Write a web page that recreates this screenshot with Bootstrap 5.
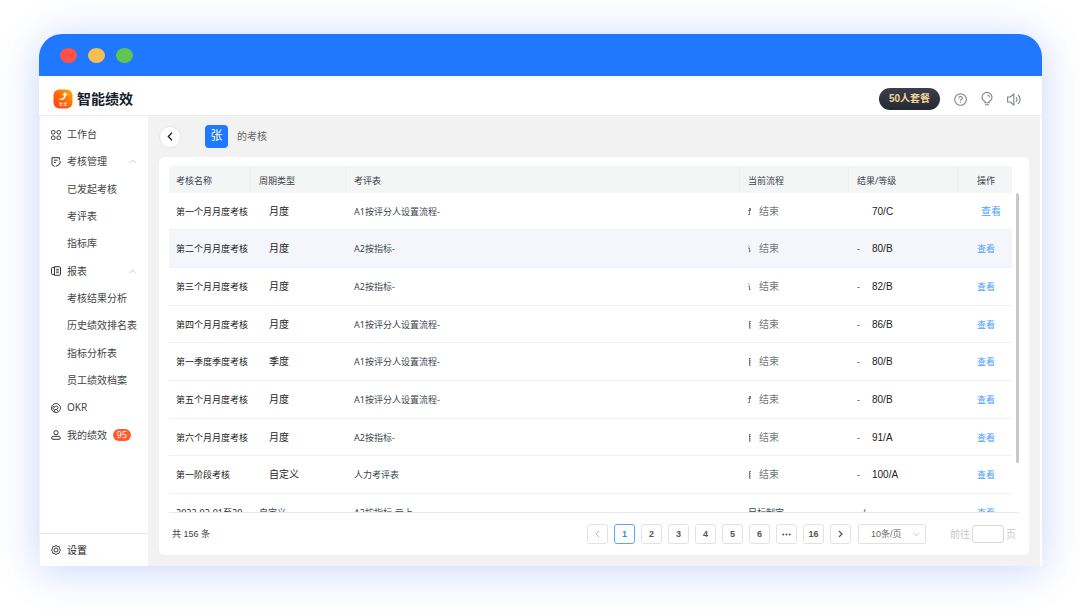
<!DOCTYPE html>
<html lang="zh-CN">
<head>
<meta charset="utf-8">
<meta name="viewport" content="width=device-width, initial-scale=1">
<title>智能绩效</title>
<link href="https://cdn.jsdelivr.net/npm/bootstrap@5.3.0/dist/css/bootstrap.min.css" rel="stylesheet">
<style>
  body { font-family: "Noto Sans", "Noto Sans CJK SC", sans-serif; font-size: 10px; line-height: 15px; color: #333; background: #fff; min-height: 100vh; padding: 34px 38px 44px 39px; }
  svg { display: block; flex: none; }
  a { text-decoration: none; }
  .app-window { border-radius: 23px 23px 0 0; box-shadow: 0 4px 40px rgba(50, 100, 255, .27); }
  .title-strip { height: 42px; padding-left: 21px; gap: 11px; background: #1f78ff; border-radius: 23px 23px 0 0; }
  .dot { width: 17px; height: 15px; border-radius: 50%; }
  .app-header { height: 40px; padding: 7px 21px 0 14px; background: #fff; border-bottom: 1px solid #ececec; }
  .brand { font-size: 14px; line-height: 20px; font-weight: 700; color: #14202e; gap: 4px; }
  .tools { gap: 14px; }
  .plan-btn { height: 22px; width: 61px; border: 0; border-radius: 11px; background: linear-gradient(#3b3f4c, #252933); color: #f3d49b; font-size: 10px; line-height: 20px; font-weight: 700; padding: 0; font-family: "Liberation Sans", "Noto Sans CJK SC", sans-serif; }
  .tool-btn { border: 0; padding: 0; background: none; color: #7d8288; }
  .side { width: 109px; background: #fff; border-left: 1px solid #f0f2f6; }
  .side-menu { padding-top: 5px; }
  .side-link { height: 27px; padding-left: 11px; padding-right: 12px; gap: 6px; color: #444; white-space: nowrap; }
  .side-menu li:nth-child(3n) .side-link { height: 28px; }
  .side-link.sub-link { padding-left: 27px; }
  .count-pill { background: #ff5b2b; color: #fff; border-radius: 6px; width: 18px; height: 12px; font-size: 9px; line-height: 12px; text-align: center; }
  .side-foot { border-top: 1px solid #e6e6e6; }
  .side-foot .side-link { height: 32px; color: #222; }
  .content { background: #f2f2f2; border-right: 2px solid #fff; padding: 9px 11px 11px; min-width: 0; }
  .back-btn { width: 22px; height: 22px; border-radius: 50%; border: 1px solid #e8e8e8; background: #fff; padding: 0; color: #222; }
  .avatar { width: 23px; height: 23px; border-radius: 4px; background: #1f78ff; color: #fff; font-size: 12px; line-height: 22px; text-align: center; margin-left: 24px; }
  .owner { margin-left: 9px; color: #666; }
  .panel { background: #fff; border-radius: 6px; padding: 9px 10px 0; margin-top: 9px; height: 398px; }
  .grid-wrap { height: 347px; overflow: hidden; padding-right: 7px; border-bottom: 1px solid #e6e9f2; position: relative; }
  .grid-table { width: 100%; table-layout: fixed; border-collapse: separate; border-spacing: 0; font-size: 9px; }
  .grid-table th { height: 27px; padding: 2px 0 0 8px; background: #f4f6f6; border-right: 1px solid #edf0f0; font-weight: 400; color: #39434d; }
  .grid-table th:last-child { border-right: 0; padding-left: 19px; }
  .grid-table td { height: 38px; padding: 0 0 0 8px; border-bottom: 1px solid #eef1f5; color: #3c4650; white-space: nowrap; }
  .grid-table tr:nth-child(3n+1) td { height: 37px; }
  .grid-table tr:last-child td { height: 38px; }
  .grid-table th:first-child, .grid-table td:first-child { padding-left: 7px; }
  .grid-table .row-hover td { background: #f4f6fb; }
  .grid-table td:first-child, .grid-table .period { color: #1c1c1c; }
  .grid-table .period { font-size: 10px; padding-left: 18px; }
  .grid-table td:last-child { padding-left: 19px; }
  .grid-table a { color: #4a9eff; }
  .grid-table a.first-view { font-size: 10px; margin-left: 4px; }
  .step-state { font-size: 10px; color: #777; margin-left: 8px; }
  .dash { width: 15px; }
  .score { font-size: 10px; color: #222; font-family: "Liberation Sans", sans-serif; }
  .scroll-thumb { position: absolute; right: 0; top: 27px; width: 3px; height: 270px; border-radius: 2px; background: #c9c9c9; }
  .pager { height: 42px; padding-left: 3px; padding-right: 3px; font-family: "Liberation Sans", "Noto Sans CJK SC", sans-serif; }
  .total { font-size: 9px; color: #444; }
  .page-btn { width: 21px; height: 20px; border: 1px solid #e2e2e2; border-radius: 3px; background: #fff; padding: 0; font-size: 9px; line-height: 18px; font-weight: 700; color: #555; }
  .page-btn.current { border-color: #55a8ff; color: #2c8fff; }
  .pages { gap: 6px; margin-right: 7px; }
  .form-select.size-select { width: 68px; height: 20px; border: 1px solid #e2e2e2; border-radius: 2px; padding: 0 0 0 12px; font-size: 9px; line-height: 18px; color: #666; background-position: right 5px center; background-size: 7px 7px; background-image: url("data:image/svg+xml,%3Csvg xmlns='http://www.w3.org/2000/svg' viewBox='0 0 8 8'%3E%3Cpath d='M1 2.5 4 5.5 7 2.5' fill='none' stroke='%23bbb'/%3E%3C/svg%3E"); }
  .jump { color: #c8c8c8; gap: 2px; margin-left: 24px; }
  .form-control.jump-box { width: 32px; height: 18px; border: 1px solid #d8d8d8; border-radius: 3px; padding: 0 4px; font-size: 9px; }
</style>
</head>
<body>
<svg width="0" height="0" class="position-absolute" aria-hidden="true">
  <symbol id="step-a" viewBox="0 0 3 9"><path d="M1.500 1v7M0 3.500h3M2.500 1v2M0 8l1.500-1" fill="none" stroke="#5c6670" stroke-width=".8"/></symbol>
  <symbol id="step-b" viewBox="0 0 3 9"><path d="M.5 1.500 1.500 2.500M0 4h1.500v4L2.800 7" fill="none" stroke="#5c6670" stroke-width=".8"/></symbol>
  <symbol id="step-c" viewBox="0 0 3 9"><path d="M1.500 1v7.500M1.500 1.500H3M1.500 3.600H3M1.500 5.800H3M1.500 8H3" fill="none" stroke="#5c6670" stroke-width=".8"/></symbol>
</svg>
<div class="app-window d-flex flex-column">
  <div class="title-strip d-flex align-items-center">
    <span class="dot" style="background:#ff5145"></span>
    <span class="dot" style="background:#f5be50"></span>
    <span class="dot" style="background:#61c554"></span>
  </div>
  <header class="app-header d-flex align-items-center justify-content-between">
    <div class="brand d-flex align-items-center">
      <svg width="20" height="20" viewBox="0 0 20 20"><defs><linearGradient id="lg" x1="0" y1="1" x2="1" y2="0"><stop offset="0" stop-color="#ff3d12"/><stop offset=".5" stop-color="#ff6a0a"/><stop offset="1" stop-color="#ffae00"/></linearGradient></defs><rect x=".5" y=".5" width="19" height="19" rx="6" fill="url(#lg)"/><path d="M5.200 9.500c3 2.800 7.800 1.500 7.600-4h-1.600c0 3.600-2.500 4.800-6 4z" fill="#fff"/><path d="M9.300 6.300 12 3l2.700 3.300z" fill="#fff"/><path d="M6 14.300h3.500M6 16.300h3.500M7.700 13.300v3.700M10.500 14.300H14M10.500 16.300H14M12.200 13.300v3.700" stroke="#ffe3d0" stroke-width=".8"/></svg>
      <span>智能绩效</span>
    </div>
    <div class="tools d-flex align-items-center">
      <button class="plan-btn" type="button">50人套餐</button>
      <button class="tool-btn" type="button" aria-label="帮助"><svg width="13" height="13" viewBox="0 0 13 13" fill="none" stroke="currentColor" stroke-width="1.100"><circle cx="6.500" cy="6.500" r="5.800"/><path d="M4.800 5.200c0-2.200 3.500-2.200 3.500 0 0 1.300-1.800 1.300-1.800 2.600M6.500 8.700v1.100"/></svg></button>
      <button class="tool-btn" type="button" aria-label="提示"><svg width="12" height="14" viewBox="0 0 12 14" fill="none" stroke="currentColor" stroke-width="1.100"><path d="M4 10.800V9.500C2 8.500 1 7.200 1 5.500a5 5 0 0 1 10 0c0 1.700-1 3-3 4v1.300zM4 12.800h4M6.500 3a2.300 2.300 0 0 1 2 2.200"/></svg></button>
      <button class="tool-btn" type="button" aria-label="声音"><svg width="14" height="13" viewBox="0 0 14 13" fill="none" stroke="currentColor" stroke-width="1.100"><path d="M.6 4h2.600L6.800 1v11L3.200 9H.6zM9 4.200c1.300 1.200 1.300 3.400 0 4.600M11 2c2.800 2.500 2.800 6.500 0 9"/></svg></button>
    </div>
  </header>
  <div class="d-flex flex-grow-1">
    <nav class="side d-flex flex-column flex-shrink-0">
      <ul class="side-menu list-unstyled mb-0 flex-grow-1">
        <li><a href="#" class="side-link d-flex align-items-center"><svg width="10" height="10" viewBox="0 0 10 10" fill="none" stroke="#333"><rect x=".5" y=".5" width="3.500" height="3.500" rx="1.300"/><rect x="6" y=".5" width="3.500" height="3.500" rx="1.300"/><rect x=".5" y="6" width="3.500" height="3.500" rx="1.300"/><rect x="6" y="6" width="3.500" height="3.500" rx="1.300"/></svg>工作台</a></li>
        <li><a href="#" class="side-link d-flex align-items-center"><svg width="10" height="10" viewBox="0 0 10 10" fill="none" stroke="#333"><path d="M3.800 9.500 1 7.800V.7h7.500v2M2.800 3.200h3.800M2.800 5.500h2M4.800 9.300l3.200-1.500 1.500-3-1.300-1"/></svg>考核管理<svg class="ms-auto" width="7" height="5" viewBox="0 0 7 5" fill="none" stroke="#bbb" stroke-width=".8"><path d="M.5 4 3.500 1l3 3"/></svg></a></li>
        <li><a href="#" class="side-link sub-link d-flex align-items-center">已发起考核</a></li>
        <li><a href="#" class="side-link sub-link d-flex align-items-center">考评表</a></li>
        <li><a href="#" class="side-link sub-link d-flex align-items-center">指标库</a></li>
        <li><a href="#" class="side-link d-flex align-items-center"><svg width="10" height="10" viewBox="0 0 10 10" fill="none" stroke="#333"><path d="M3.500.7h4.700q1.300 0 1.300 1.200v6.200q0 1.200-1.300 1.200H3.500zM3.500 1.500H1.800Q.5 1.500.5 2.700v4.600q0 1.200 1.300 1.200h1.700"/><path d="M5 3.300h3M5 5h3M5 6.700h3" stroke-width=".8"/></svg>报表<svg class="ms-auto" width="7" height="5" viewBox="0 0 7 5" fill="none" stroke="#bbb" stroke-width=".8"><path d="M.5 4 3.500 1l3 3"/></svg></a></li>
        <li><a href="#" class="side-link sub-link d-flex align-items-center">考核结果分析</a></li>
        <li><a href="#" class="side-link sub-link d-flex align-items-center">历史绩效排名表</a></li>
        <li><a href="#" class="side-link sub-link d-flex align-items-center">指标分析表</a></li>
        <li><a href="#" class="side-link sub-link d-flex align-items-center">员工绩效档案</a></li>
        <li><a href="#" class="side-link d-flex align-items-center"><svg width="10" height="10" viewBox="0 0 10 10" fill="none" stroke="#333" stroke-width=".9"><circle cx="5" cy="5" r="4.500"/><path d="M3.700 9V6.600h1.700a1.800 1.800 0 1 0-2-1.800M5.500 6.600l2 1.900M2.400 6.800a3.300 3.300 0 0 1 .4-4"/></svg>OKR</a></li>
        <li><a href="#" class="side-link d-flex align-items-center"><svg width="10" height="10" viewBox="0 0 10 10" fill="none" stroke="#333"><circle cx="5" cy="2.700" r="2.100"/><path d="M2.700 6.300h4.600q2 0 2 1.500t-1.200 1.500H1.900Q.7 9.300.7 7.800t2-1.500z"/></svg>我的绩效<span class="count-pill">95</span></a></li>
      </ul>
      <div class="side-foot"><a href="#" class="side-link d-flex align-items-center"><svg width="10" height="10" viewBox="0 0 10 10" fill="none" stroke="#222" stroke-width=".9"><path d="M5 .5 6.500 1.400l1.700.3.300 1.800L9.500 5l-1 1.500-.3 1.800-1.700.3L5 9.500l-1.500-.9-1.700-.3-.3-1.800L.5 5l1-1.500.3-1.800 1.700-.3z"/><circle cx="5" cy="5" r="2"/></svg>设置</a></div>
    </nav>
    <main class="content flex-grow-1">
      <div class="d-flex align-items-center">
        <button class="back-btn d-flex align-items-center justify-content-center" type="button" aria-label="返回"><svg width="6" height="9" viewBox="0 0 6 9" fill="none" stroke="currentColor" stroke-width="1.300"><path d="M5 .8 1.300 4.500 5 8.200"/></svg></button>
        <span class="avatar">张</span><span class="owner">的考核</span>
      </div>
      <section class="panel">
        <div class="grid-wrap">
          <table class="grid-table">
            <colgroup><col style="width:82px"><col style="width:95px"><col><col style="width:109px"><col style="width:109px"><col style="width:54px"></colgroup>
            <thead><tr><th>考核名称</th><th>周期类型</th><th>考评表</th><th>当前流程</th><th>结果/等级</th><th>操作</th></tr></thead>
            <tbody>
              <tr><td>第一个月月度考核</td><td class="period">月度</td><td>A1按评分人设置流程-</td><td><div class="d-flex align-items-center"><svg width="3" height="9"><use href="#step-a"/></svg><span class="step-state">结束</span></div></td><td><div class="d-flex"><span class="dash"></span><span class="score">70/C</span></div></td><td><a href="#" class="first-view">查看</a></td></tr>
              <tr class="row-hover"><td>第二个月月度考核</td><td class="period">月度</td><td>A2按指标-</td><td><div class="d-flex align-items-center"><svg width="3" height="9"><use href="#step-b"/></svg><span class="step-state">结束</span></div></td><td><div class="d-flex"><span class="dash">-</span><span class="score">80/B</span></div></td><td><a href="#">查看</a></td></tr>
              <tr><td>第三个月月度考核</td><td class="period">月度</td><td>A2按指标-</td><td><div class="d-flex align-items-center"><svg width="3" height="9"><use href="#step-b"/></svg><span class="step-state">结束</span></div></td><td><div class="d-flex"><span class="dash">-</span><span class="score">82/B</span></div></td><td><a href="#">查看</a></td></tr>
              <tr><td>第四个月月度考核</td><td class="period">月度</td><td>A1按评分人设置流程-</td><td><div class="d-flex align-items-center"><svg width="3" height="9"><use href="#step-c"/></svg><span class="step-state">结束</span></div></td><td><div class="d-flex"><span class="dash">-</span><span class="score">86/B</span></div></td><td><a href="#">查看</a></td></tr>
              <tr><td>第一季度季度考核</td><td class="period">季度</td><td>A1按评分人设置流程-</td><td><div class="d-flex align-items-center"><svg width="3" height="9"><use href="#step-c"/></svg><span class="step-state">结束</span></div></td><td><div class="d-flex"><span class="dash">-</span><span class="score">80/B</span></div></td><td><a href="#">查看</a></td></tr>
              <tr><td>第五个月月度考核</td><td class="period">月度</td><td>A1按评分人设置流程-</td><td><div class="d-flex align-items-center"><svg width="3" height="9"><use href="#step-a"/></svg><span class="step-state">结束</span></div></td><td><div class="d-flex"><span class="dash">-</span><span class="score">80/B</span></div></td><td><a href="#">查看</a></td></tr>
              <tr><td>第六个月月度考核</td><td class="period">月度</td><td>A2按指标-</td><td><div class="d-flex align-items-center"><svg width="3" height="9"><use href="#step-c"/></svg><span class="step-state">结束</span></div></td><td><div class="d-flex"><span class="dash">-</span><span class="score">91/A</span></div></td><td><a href="#">查看</a></td></tr>
              <tr><td>第一阶段考核</td><td class="period">自定义</td><td>人力考评表</td><td><div class="d-flex align-items-center"><svg width="3" height="9"><use href="#step-c"/></svg><span class="step-state">结束</span></div></td><td><div class="d-flex"><span class="dash">-</span><span class="score">100/A</span></div></td><td><a href="#">查看</a></td></tr>
              <tr><td>2022-02-01至20</td><td>自定义</td><td>A2按指标-云上</td><td>目标制定</td><td>- / -</td><td><a href="#">查看</a></td></tr>
            </tbody>
          </table>
          <div class="scroll-thumb"></div>
        </div>
        <div class="pager d-flex align-items-center">
          <span class="total me-auto">共 156 条</span>
          <div class="pages d-flex">
            <button class="page-btn d-flex align-items-center justify-content-center" type="button" aria-label="上一页"><svg width="5" height="8" viewBox="0 0 5 8" fill="none" stroke="#bbb"><path d="M4 1 1 4l3 3"/></svg></button>
            <button class="page-btn current" type="button">1</button>
            <button class="page-btn" type="button">2</button>
            <button class="page-btn" type="button">3</button>
            <button class="page-btn" type="button">4</button>
            <button class="page-btn" type="button">5</button>
            <button class="page-btn" type="button">6</button>
            <button class="page-btn d-flex align-items-center justify-content-center" type="button" aria-label="更多页"><svg width="9" height="3" viewBox="0 0 9 3" fill="#555"><circle cx="1.300" cy="1.500" r="1"/><circle cx="4.500" cy="1.500" r="1"/><circle cx="7.700" cy="1.500" r="1"/></svg></button>
            <button class="page-btn" type="button">16</button>
            <button class="page-btn d-flex align-items-center justify-content-center" type="button" aria-label="下一页"><svg width="5" height="8" viewBox="0 0 5 8" fill="none" stroke="#555" stroke-width="1.200"><path d="m1 1 3 3-3 3"/></svg></button>
          </div>
          <select class="form-select size-select" aria-label="每页条数"><option>10条/页</option></select>
          <div class="jump d-flex align-items-center"><label for="jump">前往</label><input id="jump" class="form-control jump-box" type="text"><span>页</span></div>
        </div>
      </section>
    </main>
  </div>
</div>
<script src="https://cdn.jsdelivr.net/npm/bootstrap@5.3.0/dist/js/bootstrap.bundle.min.js"></script>
</body>
</html>
